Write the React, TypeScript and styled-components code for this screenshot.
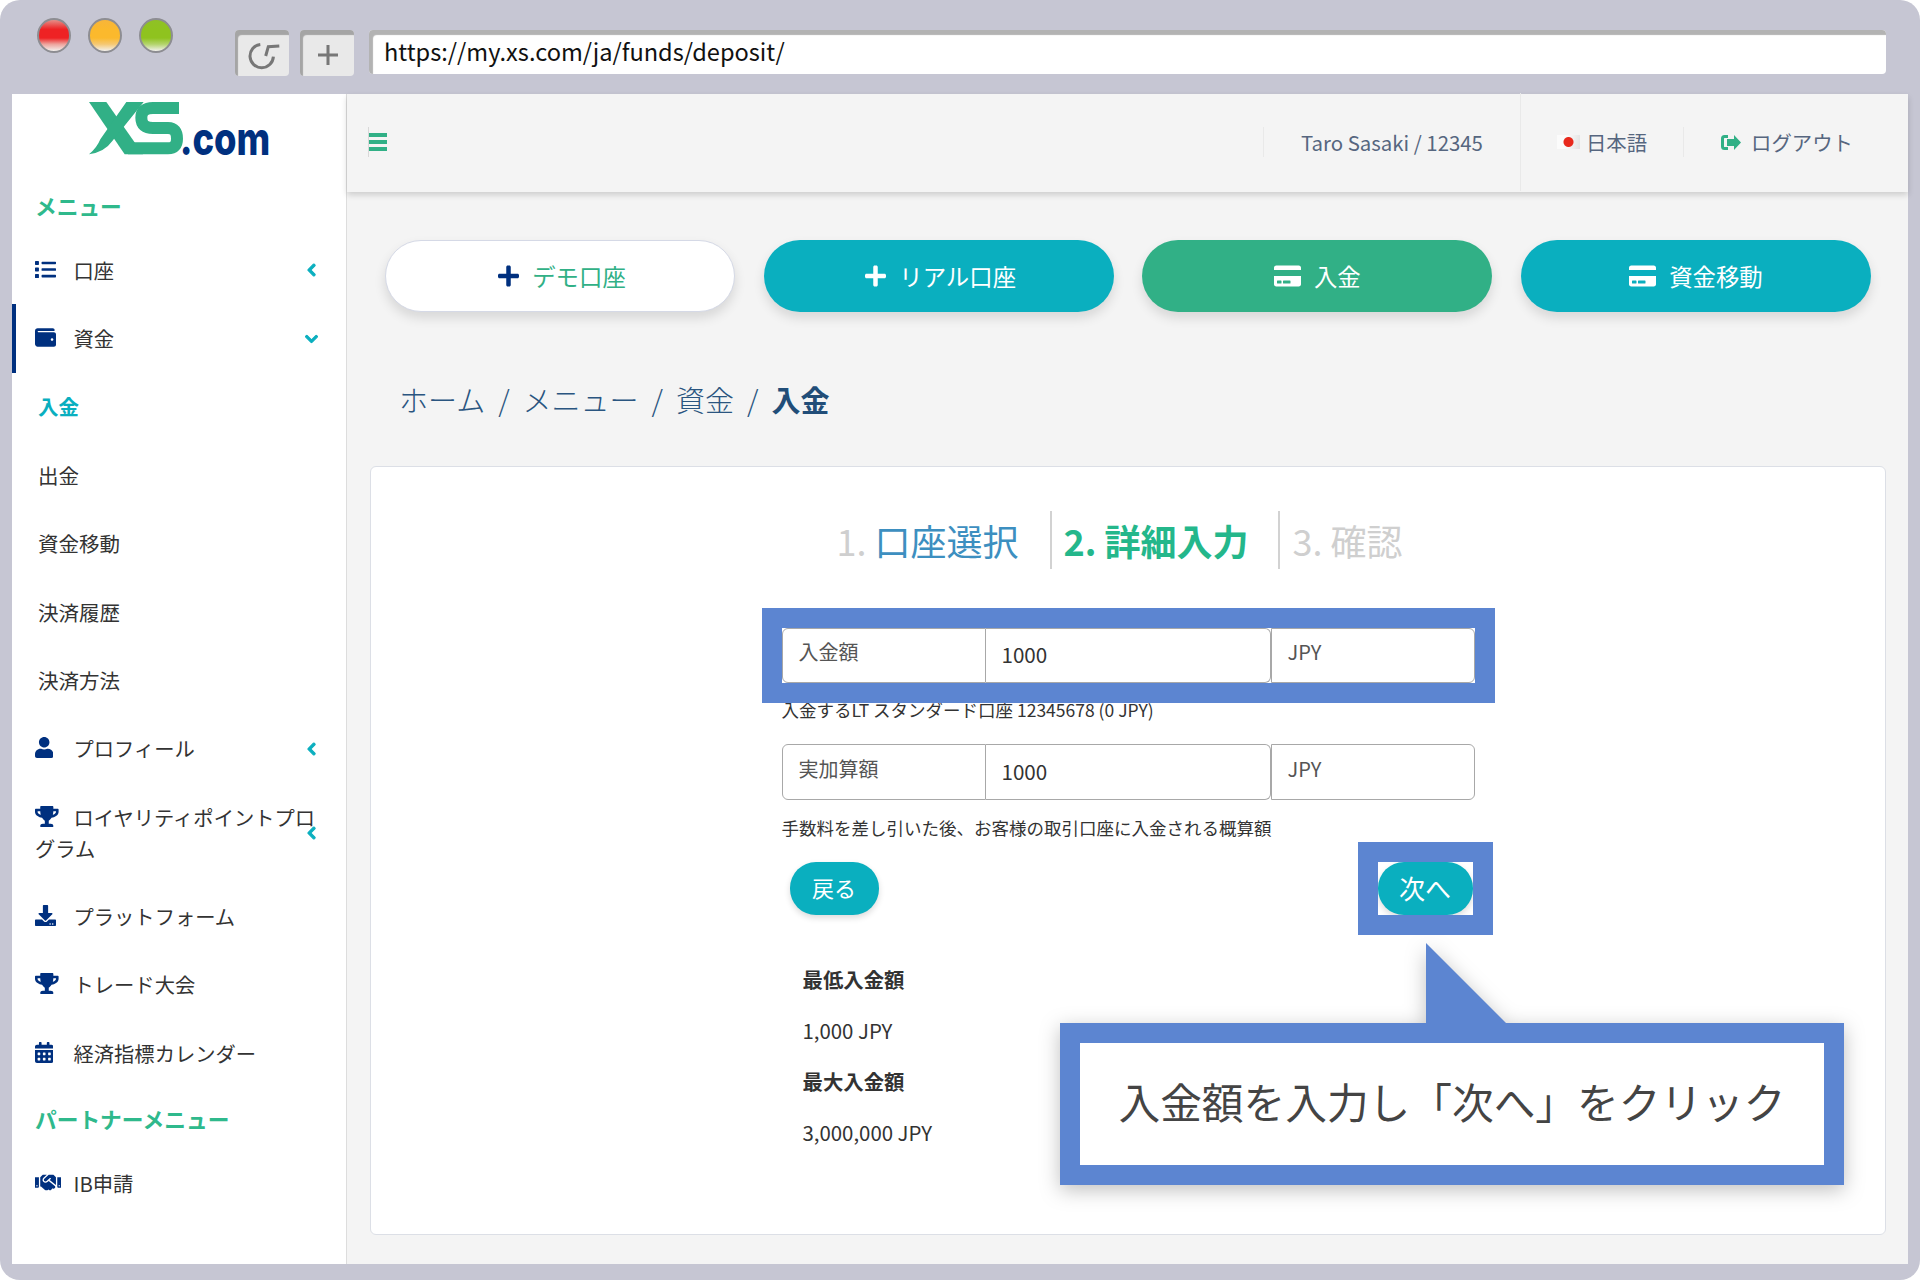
import React from 'react';
import styled, { createGlobalStyle } from 'styled-components';
import {
  FaList, FaWallet, FaUser, FaTrophy, FaDownload, FaCalendarAlt, FaHandshake,
  FaChevronLeft, FaChevronDown, FaPlus, FaCreditCard,
} from 'react-icons/fa';

const GREEN = '#31b086';
const TEAL = '#0aafbf';
const NAVY = '#00307f';
const MARK = '#5c85d1';

const GlobalStyle = createGlobalStyle`
  html, body {
    margin: 0;
    padding: 0;
    background: #fff;
    overflow: hidden;
  }
  * { box-sizing: border-box; }
  body {
    font-family: "Noto Sans CJK JP", "Noto Sans", sans-serif;
    color: #333;
  }
`;

const BrowserWindow = styled.div`
  width: 1920px;
  height: 1280px;
  background: #c6c6d3;
  border-radius: 20px;
  display: flex;
  flex-direction: column;
  overflow: hidden;
`;

const Toolbar = styled.div`
  height: 94px;
  flex: none;
  display: flex;
  padding: 18px 34px 0 37px;
`;

const Lights = styled.div`
  display: flex;
  gap: 17px;
  height: 35px;
  margin-right: 62px;
`;

const Light = styled.span<{ $c: string; $top: string; $soft: string }>`
  width: 34px;
  height: 35px;
  border-radius: 50%;
  border: 2px solid #8d8d92;
  background: linear-gradient(${p => p.$top} 0%, ${p => p.$c} 30%, ${p => p.$c} 58%, ${p => p.$soft} 78%, #f3f1ee 100%);
`;

const ToolButton = styled.div`
  width: 54px;
  height: 46px;
  margin-top: 12px;
  margin-right: 11px;
  background: #e9e9e9;
  border-radius: 4px;
  box-shadow: inset 3px 5px 1px #a5a5a5;
  display: flex;
  align-items: center;
  justify-content: center;
  padding: 4px 0 0 2px;
`;

const UrlBar = styled.div`
  flex: 1;
  height: 44px;
  margin-top: 12px;
  margin-left: 4px;
  background: #fff;
  border-radius: 4px;
  box-shadow: inset 4px 5px 1px #b3b3b3;
  padding: 1px 0 0 15px;
  font-size: 23.6px;
  line-height: 40px;
  color: #111;
`;

const Viewport = styled.div`
  flex: 1;
  display: flex;
  margin: 0 12px 16px;
  min-height: 0;
`;

const Sidebar = styled.aside`
  width: 335px;
  flex: none;
  background: #fff;
  border-right: 1px solid #ddd;
`;

const LogoBox = styled.div`
  height: 81px;
  padding: 8px 0 0 77px;
  svg { display: block; overflow: visible; }
`;

const MenuHead = styled.div<{ $h: number }>`
  height: ${p => p.$h}px;
  display: flex;
  align-items: center;
  padding-left: 23px;
  font-size: 21.7px;
  font-weight: 700;
  color: #2fb98c;
`;

const NavItem = styled.div<{ $active?: boolean }>`
  position: relative;
  padding: 18.7px 28px 18.7px ${p => (p.$active ? '19px' : '23px')};
  font-size: 20.3px;
  line-height: 31px;
  color: #333;
  border-left: ${p => (p.$active ? `4px solid ${NAVY}` : 'none')};
`;

const NavIcon = styled.span<{ $w: number }>`
  display: inline-block;
  width: 38.5px;
  vertical-align: 1px;
  line-height: 1;
  color: ${NAVY};
  svg {
    height: 21px;
    width: ${p => p.$w}px;
    display: inline-block;
    vertical-align: top;
  }
`;

const Chevron = styled.span<{ $down?: boolean }>`
  position: absolute;
  right: ${p => (p.$down ? '28px' : '30px')};
  top: 50%;
  transform: translateY(-50%);
  color: ${TEAL};
  display: flex;
  svg {
    width: ${p => (p.$down ? '13px' : '9px')};
    height: 14px;
    stroke: currentColor;
    stroke-width: 40;
  }
`;

const SubItem = styled.div<{ $active?: boolean }>`
  padding: 18.7px 0 18.7px 26px;
  font-size: 20.5px;
  line-height: 31px;
  color: ${p => (p.$active ? TEAL : '#333')};
  font-weight: ${p => (p.$active ? 700 : 400)};
`;

const Main = styled.main`
  flex: 1;
  min-width: 0;
  background: #f4f4f4;
  display: flex;
  flex-direction: column;
`;

const Topbar = styled.header`
  height: 98px;
  flex: none;
  display: flex;
  align-items: center;
  padding: 0 0 2px 21px;
  background: #f4f4f4;
  box-shadow: 0 3px 6px rgba(0, 0, 0, 0.16);
  color: #56667f;
  font-size: 20.4px;
`;

const Burger = styled.div`
  width: 19px;
  height: 30px;
  margin-right: auto;
  border-left: 1px solid #d8d8d8;
  display: flex;
  flex-direction: column;
  justify-content: center;
  gap: 3px;
  span {
    height: 4px;
    background: ${GREEN};
  }
`;

const TopCell = styled.div<{ $w: number; $line?: 'soft' | 'full' }>`
  width: ${p => p.$w}px;
  height: ${p => (p.$line === 'full' ? '98px' : '30px')};
  border-left: ${p => (p.$line ? '1px solid #e9e9e9' : 'none')};
  display: flex;
  align-items: center;
  justify-content: center;
  gap: 6px;
  line-height: 30px;
`;

const LogoutCell = styled(TopCell)`
  justify-content: flex-start;
  padding-left: 37px;
  gap: 10px;
`;

const Flag = styled.span`
  width: 23px;
  height: 14px;
  background:
    radial-gradient(circle at 50% 50%, #e8291c 0 4.5px, transparent 5.5px),
    linear-gradient(100deg, #fbfbfb 40%, #e2e2e2);
`;

const Content = styled.div`
  flex: 1;
  padding: 48px 22px 0 23px;
  display: flex;
  flex-direction: column;
  min-height: 0;
`;

const ActionRow = styled.div`
  display: grid;
  grid-template-columns: repeat(4, 350px);
  justify-content: space-between;
  padding: 0 15px;
`;

const ActionButton = styled.div<{ $bg: string; $fg: string; $line?: string; $nudge?: number }>`
  height: 72px;
  border-radius: 36px;
  background: ${p => p.$bg};
  color: ${p => p.$fg};
  border: ${p => (p.$line ? `1px solid ${p.$line}` : 'none')};
  box-shadow: 0 6px 12px rgba(0, 0, 0, 0.12);
  display: flex;
  align-items: center;
  justify-content: center;
  gap: 13px;
  padding-left: ${p => p.$nudge ?? 0}px;
  font-size: 23.4px;
`;

const ActionIcon = styled.span<{ $c?: string; $w: number; $h: number }>`
  display: flex;
  color: ${p => p.$c ?? 'inherit'};
  svg { height: ${p => p.$h}px; width: ${p => p.$w}px; }
`;

const Crumbs = styled.nav`
  height: 40px;
  margin: 67px 0 47px;
  padding-left: 29px;
  display: flex;
  align-items: center;
  gap: 13px;
  font-size: 29px;
  line-height: 40px;
  font-weight: 300;
  color: #2a5580;
  b {
    font-weight: 700;
    color: #214d78;
  }
`;

const Card = styled.section`
  position: relative;
  height: 769px;
  background: #fff;
  border: 1px solid #dcdfe6;
  border-radius: 6px;
  padding-top: 44px;
`;

const Steps = styled.div`
  display: flex;
  justify-content: center;
  padding-right: 17px;
  height: 58px;
`;

const Step = styled.div<{ $sep?: boolean }>`
  display: flex;
  align-items: center;
  gap: 8px;
  font-size: 36px;
  line-height: 58px;
  padding: 0 ${p => (p.$sep ? '30px' : '31px')} 0 ${p => (p.$sep ? '12px' : '0')};
  border-left: ${p => (p.$sep ? '2px solid #d2d2d2' : 'none')};
  &:last-child { padding-right: 0; }
`;

const StepText = styled.span<{ $c: string; $bold?: boolean }>`
  color: ${p => p.$c};
  font-weight: ${p => (p.$bold ? 700 : 400)};
`;

const FormColumn = styled.div`
  width: 693px;
  margin: 59px auto 0;
`;

const Marked = styled.div`
  position: relative;
  &::before {
    content: '';
    position: absolute;
    inset: -20px;
    border: 20px solid ${MARK};
    z-index: 2;
    pointer-events: none;
  }
`;

const InputRow = styled.div<{ $gap?: number; $h: number }>`
  display: grid;
  grid-template-columns: 204px 285px 204px;
  height: ${p => p.$h}px;
  margin-top: ${p => p.$gap ?? 0}px;
`;

const InputCell = styled.div<{ $kind: 'label' | 'value' | 'unit' }>`
  border: 1px solid #a8a8a8;
  border-left-width: ${p => (p.$kind === 'value' ? 0 : 1)}px;
  border-radius: ${p => (p.$kind === 'label' ? '6px 0 0 6px' : '0 6px 6px 0')};
  font-size: ${p => (p.$kind === 'value' ? '20.6px' : '20px')};
  line-height: 44px;
  color: ${p => (p.$kind === 'value' ? '#333' : '#555')};
  padding: ${p => (p.$kind === 'value' ? '0 0 3px 16px' : '0 0 7px 16px')};
  display: flex;
  align-items: center;
`;

const Hint = styled.p<{ $top: number }>`
  margin: ${p => p.$top}px 0 0;
  font-size: 17.5px;
  line-height: 26px;
  color: #333;
`;

const ButtonRow = styled.div`
  display: flex;
  justify-content: space-between;
  padding: 0 2px 0 8px;
  margin-top: 21px;
`;

const PillButton = styled.div<{ $w: number; $fs: number }>`
  width: ${p => p.$w}px;
  height: 53px;
  border-radius: 26px;
  background: ${TEAL};
  color: #fff;
  font-size: ${p => p.$fs}px;
  display: flex;
  align-items: center;
  justify-content: center;
  padding-bottom: 3px;
  box-shadow: 0 3px 6px rgba(0, 0, 0, 0.14);
`;

const Limits = styled.div`
  margin-top: 39px;
  padding-left: 21px;
  font-size: 20.4px;
  line-height: 51px;
  color: #333;
  b { display: block; font-weight: 700; }
  span { display: block; }
`;

const Callout = styled.div`
  position: absolute;
  left: 689px;
  top: 556px;
  width: 784px;
  height: 162px;
  border: 20px solid ${MARK};
  background: #fff;
  display: flex;
  align-items: center;
  justify-content: center;
  padding-bottom: 7px;
  font-size: 41.7px;
  color: #444;
  filter: drop-shadow(0 5px 10px rgba(0, 0, 0, 0.25));
  &::before {
    content: '';
    position: absolute;
    left: 346px;
    top: -100px;
    width: 80px;
    height: 80px;
    background: ${MARK};
    clip-path: polygon(0 0, 100% 100%, 0 100%);
  }
`;

const ReloadIcon = () => (
  <svg width="36" height="34" viewBox="0 0 36 34" fill="none" stroke="#777" strokeWidth="3">
    <path d="M15.3 6.4A11.7 11.7 0 1 0 28.4 18.7" />
    <path d="M20.7 18 23.3 8.7 34.3 8" />
  </svg>
);

const PlusIcon = () => (
  <svg width="26" height="26" viewBox="0 0 26 26" stroke="#777" strokeWidth="3">
    <path d="M13 3v20M3 13h20" />
  </svg>
);

const LogoutIcon = () => (
  <svg width="20" height="15" viewBox="0 0 20 15">
    <path d="M7 1.5H3.5Q1.5 1.5 1.5 3.5V11.5Q1.5 13.5 3.5 13.5H7" fill="none" stroke={GREEN} strokeWidth="3" />
    <path d="M6 4H13V0L20 7.5 13 15V11H6Z" fill={GREEN} />
  </svg>
);

// brand mark drawn in the crop's own units, ".com" stays text
const Logo = () => (
  <svg width="182" height="54" viewBox="88 248 546 162">
    <g fill={GREEN}>
      <path d="M88 248H140L250 405H195Z" />
      <path d="M200 248H252L158 365Q135 398 88 405Q112 385 122 360Z" />
    </g>
    <path
      d="M358 266H280Q245 266 245 295Q245 326 280 326H325Q352 326 352 358Q352 387 325 387H205"
      fill="none"
      stroke={GREEN}
      strokeWidth="36"
    />
    <text x="360" y="407" fontFamily="Inter, sans-serif" fontWeight="800" fontSize="138" fill={NAVY} textLength="272" lengthAdjust="spacingAndGlyphs">.com</text>
  </svg>
);

type NavEntry = { icon: React.ReactNode; w: number; label: string; more?: boolean };

const upper: NavEntry[] = [
  { icon: <FaUser />, w: 18.4, label: 'プロフィール', more: true },
  { icon: <FaTrophy />, w: 23.6, label: 'ロイヤリティポイントプログラム', more: true },
  { icon: <FaDownload />, w: 21, label: 'プラットフォーム' },
  { icon: <FaTrophy />, w: 23.6, label: 'トレード大会' },
  { icon: <FaCalendarAlt />, w: 18.4, label: '経済指標カレンダー' },
];

const funds = ['入金', '出金', '資金移動', '決済履歴', '決済方法'];

const Nav = ({ icon, w, label, more }: NavEntry) => (
  <NavItem>
    <NavIcon $w={w}>{icon}</NavIcon>
    {label}
    {more && <Chevron><FaChevronLeft /></Chevron>}
  </NavItem>
);

export default function App() {
  return (
    <BrowserWindow>
      <GlobalStyle />
      <Toolbar>
        <Lights>
          <Light $c="#ee2224" $top="#e58f88" $soft="#eda39c" />
          <Light $c="#fbb92d" $top="#f7b53a" $soft="#f5c873" />
          <Light $c="#8fc31f" $top="#8fc126" $soft="#b3d46c" />
        </Lights>
        <ToolButton><ReloadIcon /></ToolButton>
        <ToolButton><PlusIcon /></ToolButton>
        <UrlBar>https://my.xs.com/ja/funds/deposit/</UrlBar>
      </Toolbar>
      <Viewport>
        <Sidebar>
          <LogoBox><Logo /></LogoBox>
          <MenuHead $h={61}>メニュー</MenuHead>
          <Nav icon={<FaList />} w={21} label="口座" more />
          <NavItem $active>
            <NavIcon $w={21}><FaWallet /></NavIcon>
            資金
            <Chevron $down><FaChevronDown /></Chevron>
          </NavItem>
          {funds.map((name, i) => (
            <SubItem key={name} $active={i === 0}>{name}</SubItem>
          ))}
          {upper.map(entry => <Nav key={entry.label} {...entry} />)}
          <MenuHead $h={62}>パートナーメニュー</MenuHead>
          <Nav icon={<FaHandshake />} w={26.2} label="IB申請" />
        </Sidebar>
        <Main>
          <Topbar>
            <Burger><span /><span /><span /></Burger>
            <TopCell $w={257} $line="soft">Taro Sasaki / 12345</TopCell>
            <TopCell $w={163} $line="full"><Flag />日本語</TopCell>
            <LogoutCell $w={225} $line="soft"><LogoutIcon />ログアウト</LogoutCell>
          </Topbar>
          <Content>
            <ActionRow>
              <ActionButton $bg="#fff" $fg={GREEN} $line="#d5d9e6" $nudge={4}>
                <ActionIcon $c={NAVY} $w={21} $h={24}><FaPlus /></ActionIcon>デモ口座
              </ActionButton>
              <ActionButton $bg={TEAL} $fg="#fff" $nudge={4}>
                <ActionIcon $w={21} $h={24}><FaPlus /></ActionIcon>リアル口座
              </ActionButton>
              <ActionButton $bg={GREEN} $fg="#fff">
                <ActionIcon $w={27} $h={24}><FaCreditCard /></ActionIcon>入金
              </ActionButton>
              <ActionButton $bg={TEAL} $fg="#fff">
                <ActionIcon $w={27} $h={24}><FaCreditCard /></ActionIcon>資金移動
              </ActionButton>
            </ActionRow>
            <Crumbs>
              <span>ホーム</span><span>/</span><span>メニュー</span><span>/</span><span>資金</span><span>/</span><b>入金</b>
            </Crumbs>
            <Card>
              <Steps>
                <Step>
                  <StepText $c="#cfcfcf">1.</StepText>
                  <StepText $c="#3d8fc0">口座選択</StepText>
                </Step>
                <Step $sep>
                  <StepText $c="#24b78b" $bold>2.</StepText>
                  <StepText $c="#24b78b" $bold>詳細入力</StepText>
                </Step>
                <Step $sep>
                  <StepText $c="#cfcfcf">3.</StepText>
                  <StepText $c="#cfcfcf">確認</StepText>
                </Step>
              </Steps>
              <FormColumn>
                <Marked>
                  <InputRow $h={55}>
                    <InputCell $kind="label">入金額</InputCell>
                    <InputCell $kind="value">1000</InputCell>
                    <InputCell $kind="unit">JPY</InputCell>
                  </InputRow>
                </Marked>
                <Hint $top={14}>入金するLT スタンダード口座 12345678 (0 JPY)</Hint>
                <InputRow $gap={21} $h={56}>
                  <InputCell $kind="label">実加算額</InputCell>
                  <InputCell $kind="value">1000</InputCell>
                  <InputCell $kind="unit">JPY</InputCell>
                </InputRow>
                <Hint $top={15}>手数料を差し引いた後、お客様の取引口座に入金される概算額</Hint>
                <ButtonRow>
                  <PillButton $w={89} $fs={22}>戻る</PillButton>
                  <Marked>
                    <PillButton $w={95} $fs={26}>次へ</PillButton>
                  </Marked>
                </ButtonRow>
                <Limits>
                  <b>最低入金額</b>
                  <span>1,000 JPY</span>
                  <b>最大入金額</b>
                  <span>3,000,000 JPY</span>
                </Limits>
              </FormColumn>
              <Callout>入金額を入力し「次へ」をクリック</Callout>
            </Card>
          </Content>
        </Main>
      </Viewport>
    </BrowserWindow>
  );
}
